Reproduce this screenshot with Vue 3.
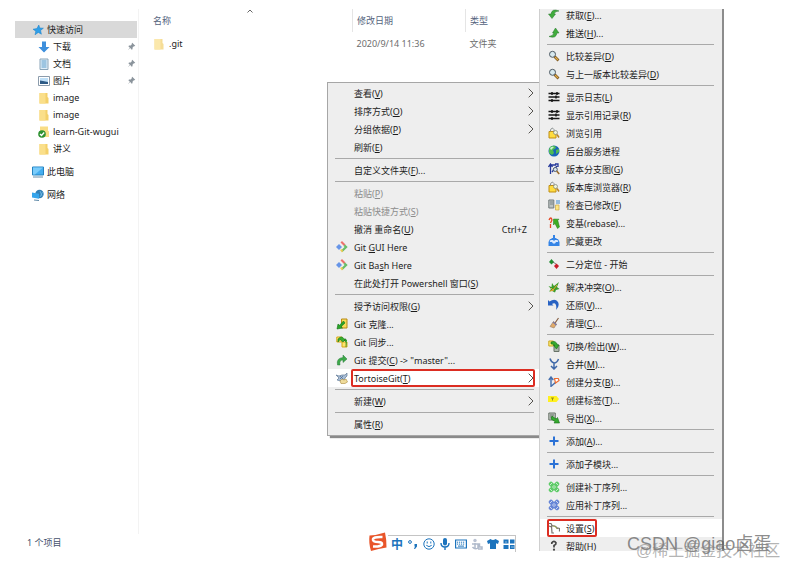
<template>
  <div class="desktop">
    <svg class="sprite" aria-hidden="true">
      <symbol id="star" viewBox="0 0 12 12"><path d="M6.8 1l1 3 3.6.2-2.8 2.2.8 3.8-3.1-1.8L3 10.8l.8-3.6L1 5.200l3.900-.7z" fill="#2f9fe8" stroke="#1b7fc4" stroke-width=".5"/></symbol>
      <symbol id="down" viewBox="0 0 12 12"><path d="M4 .5h4v5.500h3.500L6 11.500.5 6H4z" fill="#3d8fdc"/></symbol>
      <symbol id="doc" viewBox="0 0 12 12"><path d="M2 1h8v10.500H2z" fill="#dfeef8" stroke="#8aa5b8"/><path d="M3.500 3h5M3.500 5h5M3.500 7h5M3.500 9h5" stroke="#5b9cc9"/></symbol>
      <symbol id="picture" viewBox="0 0 12 12"><path d="M.5 1.500h11v9H.5z" fill="#fff" stroke="#8c9cac"/><path d="M2 3h8v6H2z" fill="#bfe0f8"/><path d="M2 5.500l3 .5 5 1V9H2z" fill="#2d5a85"/></symbol>
      <symbol id="folder" viewBox="0 0 12 12"><path d="M1.500 1h8v4l1 1v5.500h-9z" fill="#f3d06a"/><path d="M1.500 1h6v10.500h-6z" fill="#fadf8a"/></symbol>
      <symbol id="folder-ok" viewBox="0 0 12 12"><path d="M2 .5h8v4l1 1V11H2z" fill="#f9dd85"/><circle cx="4" cy="8" r="3.800" fill="#2e9131"/><path d="M2 8l1.500 1.500 2.700-3" fill="none" stroke="#fff" stroke-width="1.300"/></symbol>
      <symbol id="pc" viewBox="0 0 12 12"><path d="M.5 1h11v8H.5z" fill="#45aef0" stroke="#2583c0"/><path d="M1 1.500h10L3 8.500H1z" fill="#7accfb"/><path d="M1 11h10" stroke="#6b8ea8"/></symbol>
      <symbol id="network" viewBox="0 0 12 12"><circle cx="7.500" cy="5" r="4.200" fill="#327fb5"/><path d="M8 2l2 5M10.500 3L8 8" stroke="#7fc5ed" stroke-width=".7"/><path d="M0 3.500l7 1.300v5L0 8.500z" fill="#35a5ec"/><path d="M2 11l5 .5" stroke="#5d88a7"/></symbol>
      <symbol id="pin" viewBox="0 0 12 12"><path d="M7 1l4 4-1 .7-.8-.2L7.500 7.200 7.300 9.500l-1 .8-2-2.300L1.500 10.700 1.300 10.500 3.800 7.600 1.800 5.700l1-1 2.200-.2L6.600 2.800 6.300 1.700z" fill="#8b949c"/></symbol>
      <symbol id="git" viewBox="0 0 12 12"><path d="M3 3l3 3-3 3-3-3z" fill="#6795e8"/><path d="M4.500 1.500L6 0l3.500 3.500L8 5z" fill="#ed706c"/><path d="M9 3.500L11.700 6 6.500 11 5 9.500 8.600 6 7.500 5z" fill="#69bd68"/><path d="M4 9l2-1 1 2-1 1.500z" fill="#f0cc50"/></symbol>
      <symbol id="clone" viewBox="0 0 12 12"><path d="M5.500 1h5.500v9H5.500z" fill="#f6dc5a" stroke="#b98a14"/><path d="M1 11l1-5 1.500 1.300L7.500 3 9 5 5 8.700l1.500 1.300z" fill="#29a629" stroke="#147014" stroke-width=".6"/></symbol>
      <symbol id="sync" viewBox="0 0 12 12"><path d="M.8 1h5v5h-5zM6 6h5v5H6z" fill="#ffe56b" stroke="#d3a91b"/><path d="M2 6V3q4-4 6 0h2L7 6 4 3.500zM10 11V6l-2-2h3" fill="#37ae2e" stroke="#167616" stroke-width=".6"/></symbol>
      <symbol id="commit" viewBox="0 0 12 12"><path d="M1.500 11Q0 4 7 3.500V1l4 4-4 3.500V6Q3 6 4 11z" fill="#3daa49" stroke="#2b7b3d" stroke-width=".5"/></symbol>
      <symbol id="tortoise" viewBox="0 0 12 12"><path d="M0 3l3 1 3-1 3 0 2-2v3L9 6 8 8 5 9 1 8l2-2z" fill="#a9bdd4" stroke="#627b98" stroke-width=".7"/><path d="M4 9l2-2 2 1 2-1 1.500 3L9 11.500H5z" fill="#efdc9c" stroke="#ad8a3b" stroke-width=".6"/><path d="M4 4l3 3M7 4L4 7" stroke="#466a96" stroke-width=".7"/></symbol>
      <symbol id="pull" viewBox="0 0 12 12"><path d="M11 2Q4-1 3 5H.5L4 9.500 7.500 5H6Q7 2 11 2z" fill="#40ac3c" stroke="#24752a" stroke-width=".5"/></symbol>
      <symbol id="push" viewBox="0 0 12 12"><path d="M1 9.500Q8 12 9 6h2L7.500 1 4.500 6H6Q5 9 1 9.500z" fill="#40ac3c" stroke="#24752a" stroke-width=".5"/></symbol>
      <symbol id="lens" viewBox="0 0 12 12"><path d="M6.500 6.500l4 4" stroke="#76521b" stroke-width="2.600"/><path d="M7 7l3 3" stroke="#e0ac4b" stroke-width="1.200"/><circle cx="4.500" cy="4.300" r="3" fill="#d7e9ef" stroke="#4d5963"/></symbol>
      <symbol id="log" viewBox="0 0 12 12"><path d="M.5 2.500h11M.5 6h11M.5 9.500h11" stroke="#171717" stroke-width="1.300"/><path d="M4 1v3M8 4.500v3M4 8v3M9 1v3" stroke="#171717" stroke-width="1.500"/></symbol>
      <symbol id="browse" viewBox="0 0 12 12"><path d="M1 4.500h7V11H1z" fill="#ffdc3f" stroke="#bf8e14"/><path d="M2.500 4.500V3Q4-.5 6 2.500v2" fill="none" stroke="#8b9292"/><circle cx="7.500" cy="5.500" r="2" fill="#eef3d8" stroke="#7b8179" stroke-width=".7"/><path d="M9 7.500l2 3" stroke="#b88425" stroke-width="1.500"/></symbol>
      <symbol id="globe" viewBox="0 0 12 12"><circle cx="6" cy="6" r="5.500" fill="#1864b8"/><path d="M1 4Q3 0 7 1L8 3 5 5 6 8 4 10 1 8zM8 5l3-1v3L8 9z" fill="#4dba53"/><path d="M2 3Q4 1 6 2L3 5z" fill="#c9f2ce"/></symbol>
      <symbol id="graph" viewBox="0 0 12 12"><path d="M2.500 11V2M.5 4l2-3 2 3M3 2h5M7 1h3v3M4 9l5-6" fill="none" stroke="#24389a" stroke-width="1.300"/><circle cx="7.300" cy="6.500" r="2" fill="#d8e5ee" stroke="#4e5c70"/><path d="M8.700 8l2.500 3" stroke="#996b2c" stroke-width="1.600"/></symbol>
      <symbol id="check" viewBox="0 0 12 12"><path d="M.8 1h5v8h-5z" fill="#bdc3c3" stroke="#737b7b"/><path d="M2 3h3M2 5h3" stroke="#7a8484"/><path d="M8 2h4M8 4h4" stroke="#3c88cd"/><path d="M7.500 6H11v5H7.500z" fill="#ffe785" stroke="#c9a743" stroke-width=".7"/></symbol>
      <symbol id="rebase" viewBox="0 0 12 12"><path d="M2.500 11V7M1 3q2-4 3 0L2.500 6" fill="none" stroke="#e64622" stroke-width="1.300"/><path d="M5.500 2l5.500.2-1.200 1.300L11.500 10l-2 1.500L7 6.500 5.500 8z" fill="#3eae24" stroke="#1e7619" stroke-width=".5"/></symbol>
      <symbol id="stash" viewBox="0 0 12 12"><path d="M2 4h8l1.500 3v4H.5V7z" fill="#3484e6"/><path d="M2.500 5h7l.8 2H8L7 8.500H5L4 7H1.700z" fill="#dbeaff"/><path d="M5 0h2v3h2L6 6 3 3h2z" fill="#3484e6"/></symbol>
      <symbol id="bisect" viewBox="0 0 12 12"><path d="M3.500 1L6 4 3.500 6.500 1 4z" fill="#218d33"/><path d="M8.500 5.500L11 8l-2.500 3L6 8z" fill="#c91e2b"/><path d="M5 4l3 2" stroke="#444" stroke-width=".7"/></symbol>
      <symbol id="resolve" viewBox="0 0 12 12"><path d="M.5 5l3 1L4 2l2 3 5-4-2 5 2.500 2L8 9l-1 2.500L4 10l-3 .5L3 8z" fill="#3c9d2b"/><path d="M3 7l2 2 4-5M2 10l4-1" fill="none" stroke="#e9a42d"/></symbol>
      <symbol id="revert" viewBox="0 0 12 12"><path d="M0 1l1.500 1.500Q7-1 10 3q2 4-2 8 1-5-1-6.500Q5.500 4 4 5l1.500 1.500H0z" fill="#2862c3"/></symbol>
      <symbol id="clean" viewBox="0 0 12 12"><path d="M10.500 1L7 6" stroke="#845d41" stroke-width="1.200"/><path d="M5.500 4.500L8.500 7 6 11 2 9.500z" fill="#e1aa69" stroke="#927964" stroke-width=".6"/><path d="M5 5l3.500 3" stroke="#7877a5" stroke-width="1.300"/></symbol>
      <symbol id="switch" viewBox="0 0 12 12"><path d="M.8 1h4.500v5H.8z" fill="#ffed73" stroke="#cba724"/><path d="M6 5h5v6.500H6z" fill="#aeb8ad" stroke="#687368"/><path d="M3 2q5-2 6.500 3H11L8.500 9 5.500 5.500H7Q5 3.500 3 4z" fill="#36a92e" stroke="#176f19" stroke-width=".6"/></symbol>
      <symbol id="merge" viewBox="0 0 12 12"><path d="M2 .5Q3 4 6 5v6M10.500 1Q9 5 6 5M3 8l3 3 3-3" fill="none" stroke="#3f68a9" stroke-width="1.500"/></symbol>
      <symbol id="branch" viewBox="0 0 12 12"><path d="M3 11V1M.8 4L3 1l2.300 3M3.500 10L8 6" fill="none" stroke="#426dac" stroke-width="1.400"/><path d="M6.500 2.500h3.800l.7 2L7.500 7z" fill="#fff" stroke="#ec6c31" stroke-width="1.200"/></symbol>
      <symbol id="tag" viewBox="0 0 12 12"><path d="M0 2h8.500L11 5 8.500 8H0z" fill="#fff01f"/><path d="M3 4h3M4.500 4v2.500" stroke="#978e16"/></symbol>
      <symbol id="export" viewBox="0 0 12 12"><path d="M.8 1h6.500v7H.8z" fill="#bfc6bf" stroke="#697269"/><path d="M2 3h4M2 5h3" stroke="#697269"/><path d="M4 4l4 3 1.500-1.500L11.500 11 6 11l1-1.500L3 7z" fill="#35a92e" stroke="#176f19" stroke-width=".6"/></symbol>
      <symbol id="plus" viewBox="0 0 12 12"><path d="M6 1.500v9M1.500 6h9" stroke="#2b72d6" stroke-width="2"/></symbol>
      <symbol id="patch" viewBox="0 0 12 12"><path d="M3 3l6 6M9 3L3 9" stroke="currentColor" stroke-width="4.500" stroke-linecap="round"/><path d="M2 4l2-2M8 10l2-2M8 2l2 2M2 8l2 2M4.500 6L6 4.500 7.500 6 6 7.500z" fill="none" stroke="#fff" stroke-width=".9" opacity=".75"/></symbol>
      <symbol id="settings" viewBox="0 0 12 12"><path d="M1 1.500h2l1 2-1 1.200L1 4M3.500 4l.5 7h2M4 4q4-1 5.500 3M8 5.500l3.500 1v3" fill="none" stroke="#77726c" stroke-width="1.200"/><path d="M5 4q3 0 4 3" fill="none" stroke="#adb950" stroke-width=".8"/></symbol>
      <symbol id="help" viewBox="0 0 12 12"><path d="M3.800 4V2.800Q6 0 8 2.800 8.300 4.300 6 5.500V7.500" fill="none" stroke="#444" stroke-width="1.700"/><circle cx="6" cy="9.700" r="1.100" fill="#444"/></symbol>
      <symbol id="sogou" viewBox="0 0 20 20"><path d="M2 3.500Q10 3 17.500.5 19 7 19 15.500 11 16.500 3.500 19 1 11 2 3.500z" fill="#e9552a"/><path d="M15 5Q5 4.500 5.500 8q.5 2 5 2 4.500 0 4 2.500Q13 15 5.500 14.500" fill="none" stroke="#fff" stroke-width="2.500"/></symbol>
      <symbol id="punct" viewBox="0 0 12 12"><circle cx="3" cy="4" r="1.400" fill="none" stroke="#1d74bd"/><path d="M7.500 6h2.500v2.500L8 11H7l1-2.500h-.5z" fill="#1d74bd"/></symbol>
      <symbol id="smile" viewBox="0 0 12 12"><circle cx="6" cy="6" r="5.200" fill="none" stroke="#1d74bd"/><path d="M4.200 3.500v2M7.800 3.500v2M3.300 7.300Q6 10 8.700 7.300" fill="none" stroke="#1d74bd"/></symbol>
      <symbol id="mic" viewBox="0 0 12 12"><rect x="4" y="0" width="4" height="7.500" rx="2" fill="#1d74bd"/><path d="M2 5q0 4 4 4t4-4M6 9v3" fill="none" stroke="#1d74bd" stroke-width="1.400"/></symbol>
      <symbol id="keyboard" viewBox="0 0 12 12"><path d="M.6 2h10.800v8H.6z" fill="none" stroke="#1d74bd" stroke-width="1.200"/><path d="M2 4.200h8M2 6.100h8" stroke="#1d74bd" stroke-dasharray="1.200 .8"/><path d="M3 8.100h6" stroke="#1d74bd"/></symbol>
      <symbol id="hand" viewBox="0 0 12 12"><circle cx="4" cy="2.500" r="1.700" fill="#b9c2d2"/><path d="M1 6h6M4 5v6M1.500 9Q4 12 7 10V6h1.500v3H11v2H7" fill="none" stroke="#b0bacb" stroke-width="1.500"/></symbol>
      <symbol id="shirt" viewBox="0 0 12 12"><path d="M3.500 1Q6 3 8.500 1L12 3l-1 3-2-.7V11H3V5.300L1 6 0 3z" fill="#1d74bd"/></symbol>
      <symbol id="grid" viewBox="0 0 12 12"><path d="M.5 1.500h5v4h-5zM7 1.500h4.500v4H7zM.5 7h5v4h-5zM7 7h4.500v4H7z" fill="#1d74bd"/><path d="M2 4h2M8 9h3" stroke="#d9ebf8" stroke-width=".6"/></symbol>
      <symbol id="chevron" viewBox="0 0 6 10"><path d="M.7.7L5 5 .7 9.300" fill="none" stroke="#55534f"/></symbol>
    </svg>

    <div class="explorer">
      <nav class="sidebar">
        <a v-for="(item, i) in places" :key="i" href="#" class="place" :class="item.level">
          <svg class="icon"><use :href="'#' + item.icon" /></svg>
          <span>{{ item.name }}</span>
          <svg v-if="item.pinned" class="pin"><use href="#pin" /></svg>
        </a>
      </nav>
      <main class="files">
        <svg class="sort" viewBox="0 0 6 4"><path d="M.5 3.500L3 1l2.500 2.500" fill="none" stroke="#666"/></svg>
        <table>
          <thead>
            <tr><th class="col-name">名称</th><th class="col-date">修改日期</th><th>类型</th></tr>
          </thead>
          <tbody>
            <tr>
              <td><span class="file-name"><svg class="icon pale"><use href="#folder" /></svg>.git</span></td>
              <td>2020/9/14 11:36</td>
              <td>文件夹</td>
            </tr>
          </tbody>
        </table>
      </main>
    </div>
    <footer class="status">1 个项目</footer>

    <div v-for="menu in menus" :key="menu.name" class="menu" :class="menu.name" role="menu">
      <div v-for="(group, g) in menu.groups" :key="g" class="group" role="group">
        <button v-for="item in group" :key="item.text" type="button" role="menuitem" class="item"
          :class="{ active: item.active }" :disabled="item.disabled">
          <svg class="icon" :class="item.tone"><use v-if="item.icon" :href="'#' + item.icon" /></svg>
          <span class="label">{{ split(item.text)[0] }}<u>{{ split(item.text)[1] }}</u>{{ split(item.text)[2] }}</span>
          <span v-if="item.shortcut" class="shortcut">{{ item.shortcut }}</span>
          <svg v-if="item.sub" class="chevron"><use href="#chevron" /></svg>
          <span v-if="item.active" class="mark"></span>
        </button>
      </div>
    </div>

    <div class="ime">
      <svg class="ime-logo"><use href="#sogou" /></svg>
      <div class="ime-bar">
        <button type="button" class="ime-lang">中</button>
        <button v-for="name in imeTools" :key="name" type="button" :aria-label="name">
          <svg class="icon"><use :href="'#' + name" /></svg>
        </button>
      </div>
    </div>

    <span class="watermark csdn">CSDN @giao卤蛋</span>
    <span class="watermark juejin">@稀土掘金技术社区</span>
  </div>
</template>

<script setup>
const places = [
  { name: '快速访问', icon: 'star', level: 'root current' },
  { name: '下载', icon: 'down', pinned: true },
  { name: '文档', icon: 'doc', pinned: true },
  { name: '图片', icon: 'picture', pinned: true },
  { name: 'image', icon: 'folder' },
  { name: 'image', icon: 'folder' },
  { name: 'learn-Git-wugui', icon: 'folder-ok' },
  { name: '讲义', icon: 'folder' },
  { name: '此电脑', icon: 'pc', level: 'root spaced' },
  { name: '网络', icon: 'network', level: 'root spaced' },
];

// "&" stands before the access key
const contextGroups = [
  [
    { text: '查看(&V)', sub: true },
    { text: '排序方式(&O)', sub: true },
    { text: '分组依据(&P)', sub: true },
    { text: '刷新(&E)' },
  ],
  [{ text: '自定义文件夹(&F)...' }],
  [
    { text: '粘贴(&P)', disabled: true },
    { text: '粘贴快捷方式(&S)', disabled: true },
    { text: '撤消 重命名(&U)', shortcut: 'Ctrl+Z' },
    { text: 'Git &GUI Here', icon: 'git' },
    { text: 'Git Ba&sh Here', icon: 'git' },
    { text: '在此处打开 Powershell 窗口(&S)' },
  ],
  [
    { text: '授予访问权限(&G)', sub: true },
    { text: 'Git 克隆...', icon: 'clone' },
    { text: 'Git 同步...', icon: 'sync' },
    { text: 'Git 提交(&C) -> "master"...', icon: 'commit' },
    { text: 'TortoiseGit(&T)', icon: 'tortoise', sub: true, active: true },
  ],
  [{ text: '新建(&W)', sub: true }],
  [{ text: '属性(&R)' }],
];

const tortoiseGroups = [
  [
    { text: '获取(&E)...', icon: 'pull' },
    { text: '推送(&H)...', icon: 'push' },
  ],
  [
    { text: '比较差异(&D)', icon: 'lens' },
    { text: '与上一版本比较差异(&D)', icon: 'lens' },
  ],
  [
    { text: '显示日志(&L)', icon: 'log' },
    { text: '显示引用记录(&R)', icon: 'log' },
    { text: '浏览引用', icon: 'browse' },
    { text: '后台服务进程', icon: 'globe' },
    { text: '版本分支图(&G)', icon: 'graph' },
    { text: '版本库浏览器(&R)', icon: 'browse' },
    { text: '检查已修改(&F)', icon: 'check' },
    { text: '变基(rebase)...', icon: 'rebase' },
    { text: '贮藏更改', icon: 'stash' },
  ],
  [{ text: '二分定位 - 开始', icon: 'bisect' }],
  [
    { text: '解决冲突(&O)...', icon: 'resolve' },
    { text: '还原(&V)...', icon: 'revert' },
    { text: '清理(&C)...', icon: 'clean' },
  ],
  [
    { text: '切换/检出(&W)...', icon: 'switch' },
    { text: '合并(&M)...', icon: 'merge' },
    { text: '创建分支(&B)...', icon: 'branch' },
    { text: '创建标签(&T)...', icon: 'tag' },
    { text: '导出(&X)...', icon: 'export' },
  ],
  [{ text: '添加(&A)...', icon: 'plus' }],
  [{ text: '添加子模块...', icon: 'plus' }],
  [
    { text: '创建补丁序列...', icon: 'patch', tone: 'green' },
    { text: '应用补丁序列...', icon: 'patch', tone: 'blue' },
  ],
  [
    { text: '设置(&S)', icon: 'settings', active: true },
    { text: '帮助(&H)', icon: 'help' },
  ],
];

const menus = [
  { name: 'context', groups: contextGroups },
  { name: 'tortoise', groups: tortoiseGroups },
];

const imeTools = ['punct', 'smile', 'mic', 'keyboard', 'hand', 'shirt', 'grid'];

function split(text) {
  const at = text.indexOf('&');
  if (at < 0) return [text, '', ''];
  return [text.slice(0, at), text[at + 1], text.slice(at + 2)];
}
</script>

<style>
body {
  margin: 0;
  background: #fff;
}
</style>

<style scoped>
.desktop {
  position: relative;
  display: flex;
  flex-direction: column;
  min-height: 100vh;
  box-sizing: border-box;
  padding: 9px 15px 14px;
  overflow: hidden;
  font-family: "Noto Sans", "Noto Sans CJK SC", sans-serif;
  font-size: 9px;
  line-height: 17px;
  color: #1c1c1c;
}

.sprite {
  position: absolute;
  width: 0;
  height: 0;
}

button {
  border: 0;
  padding: 0;
  background: none;
  font: inherit;
  color: inherit;
}

.icon {
  flex: none;
  width: 12px;
  height: 12px;
}

.explorer {
  flex: 1;
  display: grid;
  grid-template-columns: 124px 1fr;
}

.sidebar {
  padding: 12px 1px 0 0;
  border-right: 1px solid #f3f3f3;
}

.place {
  display: flex;
  align-items: center;
  gap: 3px;
  height: 17px;
  padding-left: 23px;
  color: inherit;
  text-decoration: none;
}

.place.root {
  padding-left: 17px;
}

.place.current {
  background: #d9d9d9;
}

.place.spaced {
  margin-top: 6px;
}

.pin {
  width: 9px;
  height: 9px;
  margin-left: auto;
  margin-right: 1px;
}

.files {
  position: relative;
}

.sort {
  position: absolute;
  top: 0;
  left: 108px;
  width: 6px;
  height: 4px;
}

table {
  width: 100%;
  table-layout: fixed;
  border-collapse: collapse;
}

th,
td {
  height: 23px;
  padding: 0 0 0 4px;
  text-align: left;
  font-weight: normal;
  color: #6d6d6d;
}

th {
  color: #54637d;
}

th + th {
  border-left: 1px solid #e5e5e5;
}

th:first-child,
td:first-child {
  padding-left: 14px;
}

.col-name {
  width: 199px;
}

.col-date {
  width: 108px;
}

.file-name {
  display: flex;
  align-items: center;
  gap: 4px;
  color: #1c1c1c;
}

.pale {
  opacity: 0.7;
}

.status {
  padding-left: 12px;
  color: #44506b;
}

.menu {
  position: absolute;
  box-sizing: border-box;
  background: #eee;
  border: 1px solid #a6a6a6;
}

.context {
  top: 82px;
  left: 327px;
  width: 213px;
  padding: 1px 0 2px;
  box-shadow: 3px 2px 1px #8a8a8a;
}

.tortoise {
  top: 9px;
  bottom: 14px;
  left: 539px;
  width: 185px;
  overflow: hidden;
  border-width: 0 2px 0 1px;
  border-color: #8c8c8c;
  border-left-color: #cfcfcf;
}

.tortoise .group:first-child {
  margin-top: -3px;
}

.group + .group::before {
  content: "";
  display: block;
  height: 1px;
  margin: 2px 5px 2px 7px;
  background: #a9a9a9;
}

.item {
  position: relative;
  display: flex;
  align-items: center;
  width: 100%;
  height: 18px;
  padding: 0 5px 0 8px;
  text-align: left;
}

.tortoise .group + .group::before {
  margin-right: 8px;
}

.item:disabled {
  color: #8c8c8c;
}

.item.active {
  background: #fff;
}

.label {
  flex: 1;
  margin-left: 6px;
  white-space: pre;
}

.shortcut {
  margin-right: 7px;
}

.chevron {
  width: 6px;
  height: 10px;
}

/* red frame round the entry to click */
.mark {
  position: absolute;
  inset: 0 4px 0 23px;
  border: 2px solid #dc2d22;
  border-radius: 2px;
}

.tortoise .mark {
  inset: 0 125px 0 7px;
}

.green {
  color: #5ecb68;
}

.blue {
  color: #6685d6;
}

.ime {
  position: absolute;
  top: 532px;
  left: 367px;
  display: flex;
  align-items: flex-end;
}

.ime-logo {
  width: 21px;
  height: 20px;
}

.ime-bar {
  display: flex;
  align-items: center;
  gap: 4px;
  height: 16px;
  padding: 0 0 0 3px;
  border-top: 1px solid #c4c4c4;
  border-right: 1px solid #c4c4c4;
}

.ime-bar button {
  display: flex;
}

.ime-bar .ime-lang {
  width: 12px;
  font-size: 12px;
  font-weight: bold;
  color: #1d74bd;
}

.watermark {
  position: absolute;
  white-space: nowrap;
  font-family: "Liberation Sans", "Noto Sans CJK SC", sans-serif;
}

.csdn {
  top: 536px;
  left: 627px;
  font-size: 18px;
  color: rgba(90, 90, 90, 0.7);
}

.juejin {
  top: 542px;
  left: 636px;
  font-size: 16px;
  color: rgba(130, 130, 130, 0.6);
}
</style>
